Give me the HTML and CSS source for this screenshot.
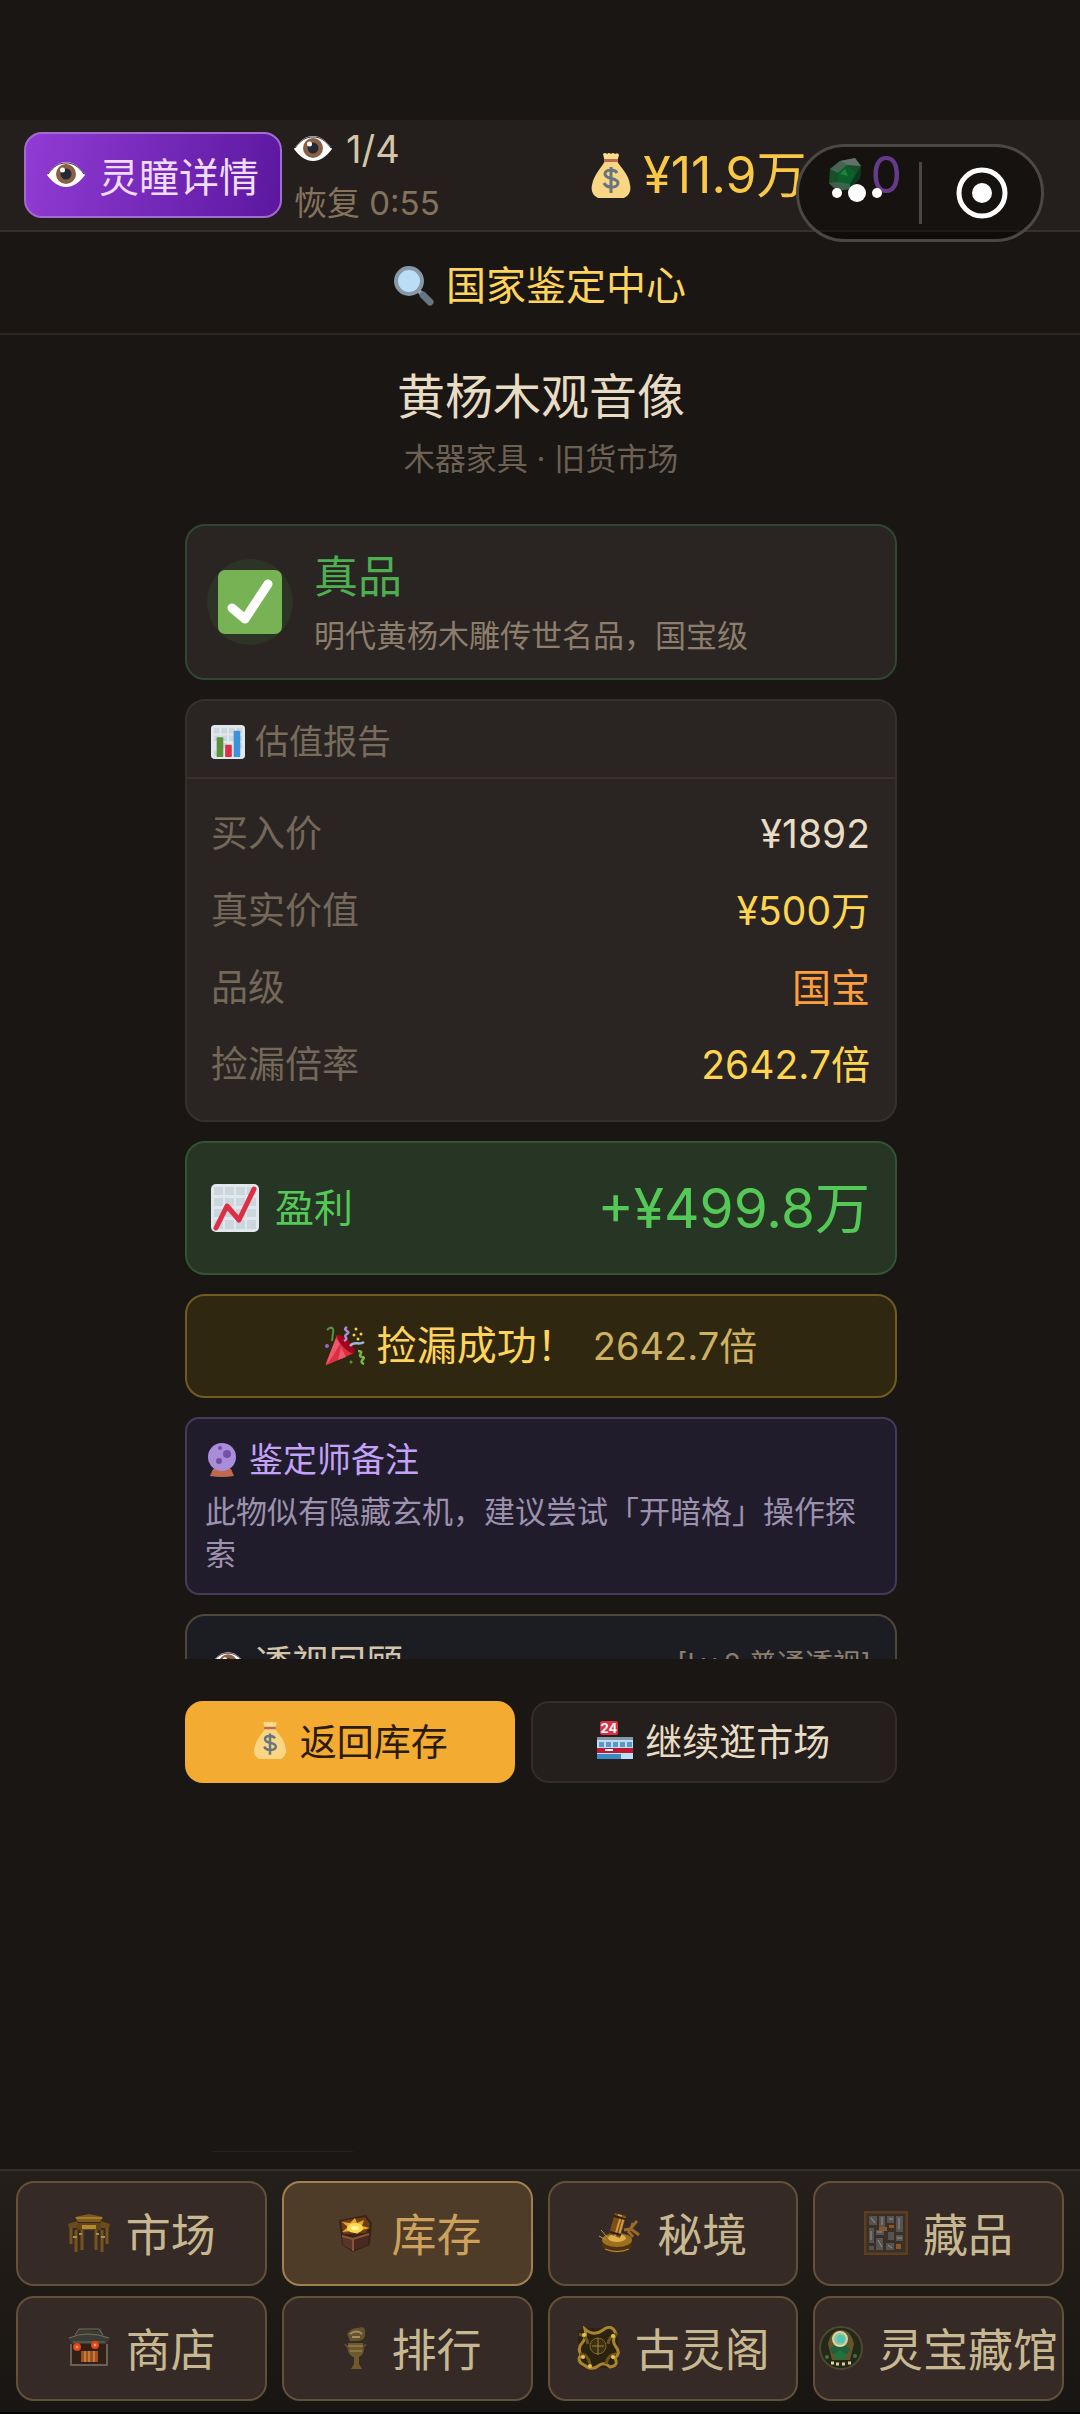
FILE: index.html
```html
<!DOCTYPE html>
<html lang="zh-CN">
<head>
    <meta charset="UTF-8">
    <meta name="viewport" content="width=device-width, initial-scale=1.0">
    <title>国家鉴定中心</title>
    <link rel="stylesheet" href="styles.css">
</head>
<body>
    <!-- Shared icons -->
    <svg class="sprite" aria-hidden="true">
        <symbol id="eye" viewBox="0 0 38 26">
            <path d="M0 13C6 4 12 0 19 0s13 4 19 13c-6 8-12 12-19 12S6 21 0 13z" fill="#fff"/>
            <path d="M1 12C7 4 12 1 19 1s12 3 18 11" fill="none" stroke="#3c3038" stroke-width="1"/>
            <circle cx="19" cy="12" r="10" fill="#8a5f45"/>
            <circle cx="19" cy="12" r="5.5" fill="#242a33"/>
            <circle cx="15.500" cy="8" r="2.500" fill="#fff"/>
        </symbol>
        <symbol id="bag" viewBox="0 0 40 46">
            <path d="M12 2q2-2 4 0 2-2 4 0 2-2 4 0 3-2 4 1l-2 7H14z" fill="#fddc8c"/>
            <path d="M14 9h12c3 6 12 13 13 24q2 9-6 13H7q-8-4-6-13C3 22 11 15 14 9z" fill="#f9d584"/>
            <path d="M13 7h14v3H13z" fill="#c1694f"/>
            <path d="M26 21c-2-4-12-4-12 1 0 6 13 3 13 9 0 5-11 6-14 0M20 15v26" fill="none" stroke="#67757f" stroke-width="3"/>
        </symbol>
        <symbol id="search" viewBox="0 0 40 40">
            <path d="M25 25l4 4" stroke="#9aaab4" stroke-width="4"/>
            <path d="M29 29l7 7" stroke="#66757f" stroke-width="7" stroke-linecap="round"/>
            <circle cx="15" cy="15" r="13" fill="#bbddf5" stroke="#8899a6" stroke-width="4"/>
        </symbol>
        <symbol id="check" viewBox="0 0 64 64">
            <rect width="64" height="64" rx="7" fill="#77b255"/>
            <path d="M14 38l13 11 23-35" fill="none" stroke="#fff" stroke-width="9" stroke-linecap="round" stroke-linejoin="round"/>
        </symbol>
        <symbol id="bars" viewBox="0 0 36 36">
            <rect width="36" height="36" rx="4" fill="#e1e8ed"/>
            <path d="M3 3h6v6H3zM11 3h6v6h-6zM19 3h6v6h-6zM27 3h6v6h-6zM3 11h6v6H3zM11 11h6v6h-6zM19 11h6v6h-6zM27 11h6v6h-6zM11 19h6v6h-6zM27 19h6v6h-6zM3 27h6v6H3z" fill="#ccd6dd"/>
            <rect x="6" y="13" width="7" height="21" rx="1" fill="#5c913b"/>
            <rect x="15" y="21" width="7" height="13" rx="1" fill="#dd2e44"/>
            <rect x="24" y="6" width="7" height="28" rx="1" fill="#3b94d9"/>
        </symbol>
        <symbol id="trend" viewBox="0 0 48 48">
            <rect width="48" height="48" rx="5" fill="#e1e8ed"/>
            <path d="M3 3h9v8H3zM14 3h9v8h-9zM25 3h9v8h-9zM36 3h9v8h-9zM3 14h9v8H3zM14 14h9v8h-9zM25 14h9v8h-9zM36 14h9v8h-9zM3 25h9v8H3zM14 25h9v8h-9zM25 25h9v8h-9zM36 25h9v8h-9zM3 36h9v9H3zM14 36h9v9h-9zM25 36h9v9h-9zM36 36h9v9h-9z" fill="#ccd6dd"/>
            <path d="M5 44l11-22 12 14L43 5" fill="none" stroke="#dd2e44" stroke-width="5" stroke-linecap="round" stroke-linejoin="round"/>
        </symbol>
        <symbol id="party" viewBox="0 0 40 40">
            <path d="M12 9l17 18L2 39q-2 1-1-2z" fill="#dd2e44"/>
            <path d="M11 12l4 6L4 36l-3 2zM16 21l5 10-8 3z" fill="#ea596e"/>
            <ellipse cx="21" cy="18" rx="4" ry="12" transform="rotate(-43 21 18)" fill="#a0041e"/>
            <path d="M2 4c5-5 7-1 6 3l-1 8" fill="none" stroke="#5c913b" stroke-width="2"/>
            <path d="M22 1c-6 4 5 4 0 7s3 4-3 7" fill="none" stroke="#aa8dd8" stroke-width="2.500"/>
            <path d="M25 20c5-6 8 0 14-4" fill="none" stroke="#9fb6dc" stroke-width="2.500"/>
            <path d="M33 25c8 0-2 5 4 6s-5 4 2 7" fill="none" stroke="#77b255" stroke-width="2.500"/>
            <g fill="#ffcc4d"><circle cx="31" cy="3" r="1.500"/><circle cx="36" cy="8" r="1.500"/><circle cx="33" cy="13" r="1.500"/><circle cx="29" cy="9" r="1.500"/></g>
            <circle cx="2" cy="20" r="2" fill="#9266cc"/><circle cx="26" cy="36" r="1.500" fill="#5c913b"/>
        </symbol>
        <symbol id="crystal" viewBox="0 0 30 34">
            <path d="M6 26h18l3 7q-12 2-24 0z" fill="#c1694f"/>
            <circle cx="15" cy="14" r="14" fill="#aa8dd8"/>
            <circle cx="20" cy="11" r="4" fill="#7450a8"/><circle cx="12" cy="18" r="3" fill="#7450a8"/><circle cx="13" cy="5" r="2" fill="#7450a8"/>
        </symbol>
    </svg>

    <header class="topbar">
        <button type="button" class="eye-button">
            <svg class="icon-eye"><use href="#eye"/></svg>灵瞳详情
        </button>
        <div class="energy">
            <div class="energy-count"><svg class="icon-eye"><use href="#eye"/></svg>1/4</div>
            <div class="energy-time">恢复 0:55</div>
        </div>
        <div class="money"><svg class="icon-money"><use href="#bag"/></svg>¥11.9万</div>
        <div class="gems">
            <svg class="icon-gem" viewBox="0 0 34 34">
                <path d="M12 3L27 0l6 8-1 12-10 11-13 2-8-8 1-14z" fill="#2b8247"/>
                <path d="M12 3l15-3 6 8-14-1z" fill="#a5bdb2"/>
                <path d="M2 11L12 3l7 4-9 8z" fill="#74a787"/>
                <path d="M10 15l9-8 9 9-6 10-12-2z" fill="#12a044"/>
                <path d="M28 16l5-8-1 12-10 11v-5z" fill="#14602f"/>
                <path d="M1 25l9-1 12 2v5L9 33z" fill="#64a67b"/>
                <path d="M12 16l5-5 3 7z" fill="#3bd873"/>
            </svg>0
        </div>
        <div class="capsule">
            <button type="button" class="capsule-more" aria-label="更多">
                <svg viewBox="0 0 50 20"><circle cx="5" cy="10" r="5"/><circle cx="25" cy="10" r="9"/><circle cx="45" cy="10" r="5"/></svg>
            </button>
            <button type="button" class="capsule-close" aria-label="关闭">
                <svg viewBox="0 0 52 52"><circle cx="26" cy="26" r="23" fill="none" stroke="#fff" stroke-width="5"/><circle cx="26" cy="26" r="10"/></svg>
            </button>
        </div>
    </header>

    <h1 class="page-title"><svg class="icon-title"><use href="#search"/></svg>国家鉴定中心</h1>

    <main class="content">
        <h2 class="item-name">黄杨木观音像</h2>
        <p class="item-sub">木器家具 · 旧货市场</p>

        <div class="report">
            <section class="card verdict">
                <div class="verdict-icon"><svg><use href="#check"/></svg></div>
                <div>
                    <h3>真品</h3>
                    <p>明代黄杨木雕传世名品，国宝级</p>
                </div>
            </section>

            <section class="card valuation">
                <h3><svg class="icon-small"><use href="#bars"/></svg>估值报告</h3>
                <dl>
                    <div><dt>买入价</dt><dd>¥1892</dd></div>
                    <div><dt>真实价值</dt><dd class="gold">¥500万</dd></div>
                    <div><dt>品级</dt><dd class="orange">国宝</dd></div>
                    <div><dt>捡漏倍率</dt><dd class="gold">2642.7倍</dd></div>
                </dl>
            </section>

            <section class="card profit">
                <h3><svg class="icon-trend"><use href="#trend"/></svg>盈利</h3>
                <strong>+¥499.8万</strong>
            </section>

            <section class="card success">
                <svg class="icon-title"><use href="#party"/></svg>
                <span>捡漏成功！</span>
                <span class="times">2642.7倍</span>
            </section>

            <section class="card note">
                <h3><svg class="icon-small"><use href="#crystal"/></svg>鉴定师备注</h3>
                <p>此物似有隐藏玄机，建议尝试「开暗格」操作探索</p>
            </section>

            <section class="card review">
                <h3><svg class="icon-review"><use href="#eye"/></svg>透视回顾</h3>
                <span>[Lv.2 普通透视]</span>
            </section>
        </div>

        <div class="actions">
            <button type="button" class="primary"><svg class="icon-action"><use href="#bag"/></svg>返回库存</button>
            <button type="button">
                <svg class="icon-store" viewBox="0 0 36 38">
                    <path d="M0 16h36v22H0z" fill="#bbddf5"/>
                    <path d="M0 16h36v3H0z" fill="#8899a6"/>
                    <path d="M2 21h5v5H2zM9 21h5v5H9zM16 21h5v5h-5zM23 21h5v5h-5zM30 21h5v5h-5z" fill="#5b96c7"/>
                    <path d="M0 27h36v5H0z" fill="#be1931"/>
                    <path d="M8 28h8v2H8z" fill="#fff"/>
                    <path d="M0 33h24v5H0z" fill="#3b88c3"/>
                    <rect x="3" width="18" height="14" rx="2" fill="#dd2e44"/>
                    <text x="12" y="12" text-anchor="middle" fill="#fff" font-size="13" font-weight="700">24</text>
                </svg>继续逛市场
            </button>
        </div>

        <div class="hint-line"></div>
    </main>

    <nav class="tabs">
        <button type="button">
            <svg viewBox="0 0 44 44">
                <path d="M8 6l14-3 14 3-3 5H11z" fill="#7d5a20"/>
                <path d="M9 7h26M5 14h34" stroke="#a47a30" stroke-width="2"/>
                <path d="M1 13l9-3 2 7H2zM43 13l-9-3-2 7h10z" fill="#6b4b1c"/>
                <path d="M10 12h24v7H10z" fill="#634515"/>
                <path d="M15 14h14v4H15z" fill="#b58934"/>
                <path d="M4 17v16M9 19v22M15 19v20M29 19v20M35 19v22M40 17v16" stroke="#76541f" stroke-width="3"/>
                <path d="M12 23h3M29 23h3M6 26h4M34 26h4" stroke="#b08b4a" stroke-width="2"/>
            </svg>市场
        </button>
        <button type="button" class="active">
            <svg viewBox="0 0 44 44">
                <path d="M6 9l27-5 6 8-2 22-17 7L9 34z" fill="#3a211a"/>
                <path d="M8 10l24-4 5 7-4 9-23 1z" fill="#6d3e14"/>
                <path d="M22 7l2 5 7-3-2 6 8 2-8 2-5 4-5-3-10 1 6-5-6-5 8 1z" fill="#e9a72c"/>
                <ellipse cx="22" cy="17" rx="8" ry="5" fill="#fbd94f"/>
                <ellipse cx="22" cy="17" rx="4" ry="2" fill="#fff3a0"/>
                <path d="M9 24l10 3v12L10 34z" fill="#5a3427"/>
                <path d="M21 27l15-4-1 11-14 5z" fill="#482a20"/>
                <path d="M9 25l11 3 16-5M20 28v12" stroke="#85553a" stroke-width="2" fill="none"/>
            </svg>库存
        </button>
        <button type="button">
            <svg viewBox="0 0 44 44">
                <ellipse cx="19" cy="34" rx="15" ry="8" fill="#4e3310"/>
                <ellipse cx="19" cy="29" rx="15" ry="7" fill="#9f6f20"/>
                <ellipse cx="19" cy="27" rx="9" ry="4" fill="#e0ae4a"/>
                <path d="M17 2l11 3-6 22-11-4z" fill="#7d4f16"/>
                <path d="M20 4l3 1-6 20M26 6l-5 18" stroke="#d39a40" stroke-width="2" fill="none"/>
                <path d="M16 5l11 3M12 21l11 3" stroke="#2f1c0b" stroke-width="2"/>
                <path d="M26 19l6-1 7-8M33 18l2-6M33 18l8 6M30 20l5 6" stroke="#9b692a" stroke-width="3" fill="none"/>
                <path d="M3 19l7 8M1 25l7 4M7 38q12 5 24 0" stroke="#c49344" stroke-width="1" fill="none"/>
            </svg>秘境
        </button>
        <button type="button">
            <svg viewBox="0 0 44 44">
                <rect x="1" y="1" width="42" height="42" fill="#3a3028" stroke="#5c3e20" stroke-width="3"/>
                <path d="M5 5h8v9H5zM15 5h6v11h-6zM23 5h7v7h-7zM32 5h7v16h-7zM5 17h5v15H5zM12 19h8v5h-8zM24 21h6v8h-6zM12 27h7v12h-7zM22 32h8v7h-8zM32 24h7v6h-7zM5 35h5v4H5z" fill="#555453"/>
                <path d="M7 7l4 5M18 6v8M25 8h4M35 7v11M7 20v9M13 21h5M14 29l4 7M24 34l4 3M33 27h5" stroke="#989184" stroke-width="1"/>
                <path d="M15 16h8v4h-8zM32 33h5v5h-5zM25 14h5v3h-5z" fill="#8c562d"/>
            </svg>藏品
        </button>
        <button type="button">
            <svg viewBox="0 0 44 44">
                <path d="M5 16h34v23H5z" fill="#302017"/>
                <path d="M1 12L9 9l3-6 19 2 3-4 2 8 7 3-4 6H5z" fill="#3b3c34"/>
                <path d="M2 12q18-8 40 0M8 9l4-6h20l4 6M6 16h32" stroke="#756e5c" stroke-width="1" fill="none"/>
                <path d="M14 25h17v11H14z" fill="#9f501e"/>
                <path d="M18 25v11M22 25v11M27 25v11" stroke="#e4ac59" stroke-width="1"/>
                <path d="M4 18v21h36V18" stroke="#6b6053" stroke-width="2" fill="none"/>
                <circle cx="10" cy="21" r="4" fill="#e04519"/><circle cx="28" cy="19" r="4" fill="#e04519"/>
                <circle cx="10" cy="21" r="1.500" fill="#ff9d4c"/><circle cx="28" cy="19" r="1.500" fill="#ff9d4c"/>
            </svg>商店
        </button>
        <button type="button">
            <svg viewBox="0 0 44 44">
                <path d="M14 8q5-7 11-6 8-3 7 5 1 7-7 8H17z" fill="#645332"/>
                <path d="M17 8q7-5 12 0M19 11h8" stroke="#a48d56" stroke-width="2" fill="none"/>
                <path d="M15 17h15q3 11-4 14h-6q-7-4-5-14z" fill="#6c5930"/>
                <path d="M12 18l4 5M33 18l-4 5" stroke="#5b4b2e" stroke-width="2"/>
                <path d="M15 20h15M17 25h12" stroke="#aa9153" stroke-width="1"/>
                <path d="M21 30h5v8l3 5H18l3-5z" fill="#725a28"/>
            </svg>排行
        </button>
        <button type="button">
            <svg viewBox="0 0 44 44">
                <rect x="2" y="2" width="40" height="40" rx="8" fill="#2b230d"/>
                <path d="M9 3q9 8 18 1t13 4q-5 7 0 13t-1 11q4 8-5 9-6-6-12-1t-14-1q-8-4-3-10-4-7 1-12T9 3z" fill="none" stroke="#a88430" stroke-width="3"/>
                <path d="M3 8q8 2 9 10M41 8q-8 2-9 10M4 28q8 0 10 10M40 28q-8 0-10 10" fill="none" stroke="#6c531b" stroke-width="3"/>
                <circle cx="22" cy="20" r="8" fill="#3b3016" stroke="#80652a"/>
                <path d="M22 12v17M16 20h12" stroke="#a38339" stroke-width="1"/>
                <g fill="#eac44e"><circle cx="7" cy="31" r="2"/><circle cx="37" cy="31" r="2"/><circle cx="37" cy="10" r="2"/><circle cx="14" cy="40" r="2"/><circle cx="8" cy="9" r="2"/></g>
            </svg>古灵阁
        </button>
        <button type="button">
            <svg viewBox="0 0 44 44">
                <circle cx="22" cy="22" r="21" fill="#242819" stroke="#4c4934" stroke-width="2"/>
                <path d="M9 18q3-14 13-14t13 14l-4 16H13z" fill="#65532a"/>
                <ellipse cx="21" cy="24" rx="10" ry="5" fill="#225f3b"/>
                <circle cx="21" cy="13" r="7" fill="#8ec5a1" stroke="#d4d7a1" stroke-width="2"/>
                <circle cx="22" cy="13" r="4" fill="#52c4b4"/>
                <path d="M15 28l6-4 6 4v5H15z" fill="#22723f"/>
                <path d="M12 37h3M17 38h3M23 38h3M29 37h3" stroke="#dfce94" stroke-width="3"/>
                <circle cx="8" cy="31" r="2" fill="#42703f"/><circle cx="36" cy="30" r="2" fill="#42703f"/>
            </svg>灵宝藏馆
        </button>
    </nav>
</body>
</html>
```
FILE: styles.css
```css
* {
    box-sizing: border-box;
    margin: 0;
    padding: 0;
}

body {
    position: relative;
    display: flex;
    flex-direction: column;
    min-height: 100vh;
    padding-top: 120px;
    border-bottom: 2px solid #000;
    background-color: #1a1613;
    color: #e8dcc4;
    font-family: Inter, "Noto Sans CJK SC", sans-serif;
}

h1, h2, h3 {
    font-weight: 400;
}

button {
    display: flex;
    align-items: center;
    justify-content: center;
    border: none;
    background: none;
    color: inherit;
    font-family: inherit;
    white-space: nowrap;
    cursor: pointer;
}

svg {
    flex-shrink: 0;
}

.sprite {
    position: absolute;
    width: 0;
    height: 0;
}

.icon-eye {
    width: 38px;
    height: 26px;
}

.icon-money {
    width: 40px;
    height: 46px;
}

.icon-gem,
.icon-small {
    width: 34px;
    height: 34px;
}

.icon-title {
    width: 40px;
    height: 40px;
}

.icon-trend {
    width: 48px;
    height: 48px;
}

.icon-review {
    width: 34px;
    height: 24px;
}

.icon-action,
.icon-store {
    width: 36px;
    height: 38px;
}

/* top bar */
.topbar {
    display: flex;
    align-items: center;
    padding: 0 178px 0 24px;
    border-bottom: 2px solid #35302c;
    background-color: #241f1c;
    white-space: nowrap;
}

.eye-button {
    gap: 14px;
    height: 86px;
    padding: 0 21px;
    border: 2px solid #a36ad0;
    border-radius: 18px;
    background: linear-gradient(100deg, #913bd4, #5b189f);
    color: #f0dcff;
    font-size: 40px;
}

.energy {
    margin-left: 12px;
    padding-top: 2px;
    line-height: 54px;
}

.energy-count {
    display: flex;
    align-items: center;
    gap: 14px;
    color: #d4c4a8;
    font-size: 38px;
}

.energy-time {
    color: #84735c;
    font-size: 33px;
}

.money,
.gems {
    display: flex;
    align-items: center;
    font-size: 50px;
    line-height: 60px;
}

.money {
    gap: 12px;
    margin-left: auto;
    color: #f8c846;
}

.gems {
    gap: 8px;
    margin-left: 22px;
    color: #a763e4;
}

.capsule {
    position: absolute;
    top: 144px;
    right: 36px;
    display: flex;
    width: 248px;
    height: 98px;
    border: 3px solid #4b4744;
    border-radius: 50px;
    background-color: rgba(0, 0, 0, 0.4);
}

.capsule svg {
    fill: #fff;
}

.capsule-more {
    width: 120px;
    padding-right: 4px;
}

.capsule-more svg {
    width: 50px;
    height: 20px;
}

.capsule-close {
    position: relative;
    flex: 1;
    padding-left: 4px;
}

.capsule-close::before {
    content: "";
    position: absolute;
    left: 0;
    width: 3px;
    height: 62px;
    background-color: #4b4744;
}

.capsule-close svg {
    width: 52px;
    height: 52px;
}

.page-title {
    display: flex;
    align-items: center;
    justify-content: center;
    gap: 12px;
    padding: 24px 0 17px;
    border-bottom: 2px solid #2e2620;
    color: #ffd45c;
    font-size: 40px;
    line-height: 60px;
}

/* report */
.content {
    display: flex;
    flex: 1;
    flex-direction: column;
    padding: 28px 183px 0 185px;
}

.item-name {
    font-size: 48px;
    line-height: 68px;
    text-align: center;
}

.item-sub {
    margin: 6px 0 43px;
    color: #6d6154;
    font-size: 31px;
    line-height: 44px;
    text-align: center;
}

.report {
    display: flex;
    flex-direction: column;
    gap: 19px;
    max-height: 47vh;
    overflow-y: auto;
    scrollbar-width: none;
}

.card {
    flex-shrink: 0;
    border: 2px solid #35302c;
    border-radius: 20px;
    background-color: #2a2522;
}

.card h3 {
    display: flex;
    align-items: center;
    gap: 10px;
}

.verdict {
    display: flex;
    align-items: center;
    gap: 21px;
    padding: 20px;
    border-color: #2f4930;
}

.verdict-icon {
    display: flex;
    align-items: center;
    justify-content: center;
    width: 86px;
    height: 86px;
    border-radius: 50%;
    background-color: #2d3325;
}

.verdict-icon svg {
    width: 64px;
    height: 64px;
}

.verdict h3 {
    margin-bottom: 6px;
    color: #4caf50;
    font-size: 44px;
    line-height: 62px;
}

.verdict p {
    color: #8c7d6c;
    font-size: 31px;
    line-height: 44px;
}

.valuation h3 {
    padding: 16px 24px 10px;
    border-bottom: 2px solid #38312d;
    color: #786c5d;
    font-size: 34px;
    line-height: 50px;
}

.valuation dl {
    padding: 16px 25px 17px 24px;
}

.valuation dl div {
    display: flex;
    justify-content: space-between;
    line-height: 77px;
}

.valuation dt {
    color: #73685a;
    font-size: 37px;
}

.valuation dd {
    font-size: 39px;
}

.valuation .gold {
    color: #ffd54f;
}

.valuation .orange {
    color: #ff9f3c;
}

.profit {
    display: flex;
    align-items: center;
    justify-content: space-between;
    padding: 26px 25px 26px 24px;
    border-color: #335334;
    background-color: #273524;
    color: #55c957;
    line-height: 78px;
}

.profit h3 {
    gap: 16px;
    font-size: 39px;
}

.profit strong {
    font-size: 55px;
    font-weight: 400;
}

.success {
    display: flex;
    align-items: center;
    justify-content: center;
    gap: 12px;
    padding: 20px 24px;
    border-color: #705b21;
    background-color: #302710;
    color: #ffd45c;
    font-size: 40px;
    line-height: 60px;
}

.success .times {
    margin-left: 4px;
    color: #ceb163;
    font-size: 38px;
}

.note {
    padding: 18px;
    border-color: #443a5c;
    border-radius: 14px;
    background-color: #211c2b;
}

.note h3 {
    margin-bottom: 8px;
    color: #c3a2f8;
    font-size: 34px;
    line-height: 46px;
}

.note p {
    color: #9c91ae;
    font-size: 31px;
    line-height: 42px;
}

.review {
    display: flex;
    align-items: center;
    justify-content: space-between;
    padding: 20px 24px;
    border-color: #4f473b;
    background-color: #1c1c23;
    line-height: 56px;
}

.review h3 {
    color: #d4c4a8;
    font-size: 37px;
}

.review span {
    color: #8c7d6c;
    font-size: 28px;
}

/* buttons under the report */
.actions {
    display: flex;
    gap: 16px;
    margin-top: 42px;
}

.actions button {
    flex: 1 1 auto;
    gap: 12px;
    height: 82px;
    padding-bottom: 4px;
    border: 2px solid #332c28;
    border-radius: 18px;
    background-color: #241f1c;
    font-size: 37px;
}

.actions .primary {
    border-color: #f4ab32;
    background-color: #f4ab32;
    color: #2b1b09;
}

.hint-line {
    width: 140px;
    height: 1px;
    margin: auto 0 17px 28px;
    background-color: #25211d;
}

/* bottom navigation */
.tabs {
    display: grid;
    grid-template-columns: repeat(4, 1fr);
    gap: 10px 15px;
    padding: 10px 16px 11px;
    border-top: 2px solid #35302c;
    background: linear-gradient(#241f1a, #191512);
}

.tabs button {
    gap: 15px;
    height: 105px;
    min-width: 0;
    padding-bottom: 2px;
    border: 2px solid #625039;
    border-radius: 18px;
    background-color: #352a25;
    color: #c8b892;
    font-size: 45px;
}

.tabs svg {
    width: 44px;
    height: 44px;
}

.tabs .active {
    border-color: #9f8051;
    background-color: #4e3c28;
    color: #cda15c;
}
```
